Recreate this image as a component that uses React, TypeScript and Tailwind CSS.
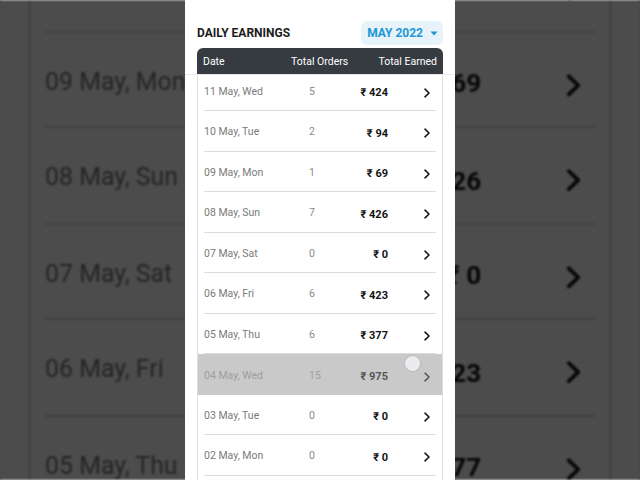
import React from "react";

type Day = { date: string; orders: number; earned: number; active?: boolean };

const days: Day[] = [
  { date: "11 May, Wed", orders: 5, earned: 424 },
  { date: "10 May, Tue", orders: 2, earned: 94 },
  { date: "09 May, Mon", orders: 1, earned: 69 },
  { date: "08 May, Sun", orders: 7, earned: 426 },
  { date: "07 May, Sat", orders: 0, earned: 0 },
  { date: "06 May, Fri", orders: 6, earned: 423 },
  { date: "05 May, Thu", orders: 6, earned: 377 },
  { date: "04 May, Wed", orders: 15, earned: 975, active: true },
  { date: "03 May, Tue", orders: 0, earned: 0 },
  { date: "02 May, Mon", orders: 0, earned: 0 },
  { date: "01 May, Sun", orders: 0, earned: 0 },
];

const Chevron = ({ color }: { color: string }) => (
  <svg width="8" height="10" viewBox="0 0 8 10" fill="none">
    <path d="M2 1.2 L6 5 L2 8.8" stroke={color} strokeWidth="1.6" strokeLinecap="round" strokeLinejoin="round" />
  </svg>
);

const DayRow: React.FC<{ day: Day }> = ({ day }) => {
  const hot = !!day.active;
  return (
    <div className={`relative h-[40.5px] px-[6px] ${hot ? "bg-[#c9c9c9]" : ""}`}>
      <div className={`flex h-full items-center pt-[3px] ${hot ? "" : "border-b border-[#dcdcdc]"}`}>
        <span className={`w-[105px] text-[10.5px] ${hot ? "text-[#9d9d9d]" : "text-[#7a7a7a]"}`}>{day.date}</span>
        <span className={`w-[30px] text-[10.5px] ${hot ? "text-[#a0a0a0]" : "text-[#8a8a8a]"}`}>{day.orders}</span>
        <span className={`mt-[3px] flex-1 text-right text-[11px] font-bold ${hot ? "text-[#555]" : "text-[#141414]"}`}>
          ₹ {day.earned}
        </span>
        <span className="mt-[2px] flex w-[48px] justify-end pr-[5px]">
          <Chevron color={hot ? "#5a5a5a" : "#151515"} />
        </span>
      </div>
      {hot && (
        <div className="absolute left-[206px] top-[1px] h-[17px] w-[17px] rounded-full border border-[#b9b9b9] bg-[#ececf0]" />
      )}
    </div>
  );
};

const Screen: React.FC = () => (
  <div className="bg-white">
    <div className="relative z-10 border-b border-[#e8e8e8] bg-white px-3 pt-[21px]">
      <div className="flex h-6 items-center justify-between">
        <h2 className="text-[12px] font-bold text-[#1c1c1c]">DAILY EARNINGS</h2>
        <div className="flex h-6 items-center gap-[7px] rounded-[6px] bg-[#e6f3fb] pl-[6px] pr-[5px] text-[12px] font-bold text-[#1f97d4]">
          <span>MAY 2022</span>
          <svg width="8" height="5" viewBox="0 0 8 5">
            <polygon points="0.5,0.5 7.5,0.5 4,4.5" fill="#1f97d4" />
          </svg>
        </div>
      </div>
      <div className="mt-[3px] flex h-[26px] items-center rounded-t-[6px] bg-[#363b42] px-[6px] pt-[1px] text-[10.5px] text-white">
        <span className="w-[88px]">Date</span>
        <span>Total Orders</span>
        <span className="ml-auto">Total Earned</span>
      </div>
    </div>

    <div className="mx-3 -mt-[4.5px] border-x border-[#e0e0e0]">
      {days.map(d => (
        <DayRow key={d.date} day={d} />
      ))}
    </div>
  </div>
);

export default function App() {
  return (
    <div className="relative h-[480px] w-[640px] overflow-hidden bg-[#4a4a4a] font-['Roboto',sans-serif]">
      {/* enlarged, dimmed copy behind the phone frame */}
      <div className="absolute inset-0 blur-[1px]">
        <div className="absolute left-0 top-[-327px] w-[270px] origin-top-left scale-[2.37]">
          <Screen />
        </div>
        <div className="absolute inset-0 bg-black/70" />
      </div>

      <div className="relative mx-auto h-full w-[270px] overflow-hidden bg-white">
        <Screen />
      </div>
    </div>
  );
}
